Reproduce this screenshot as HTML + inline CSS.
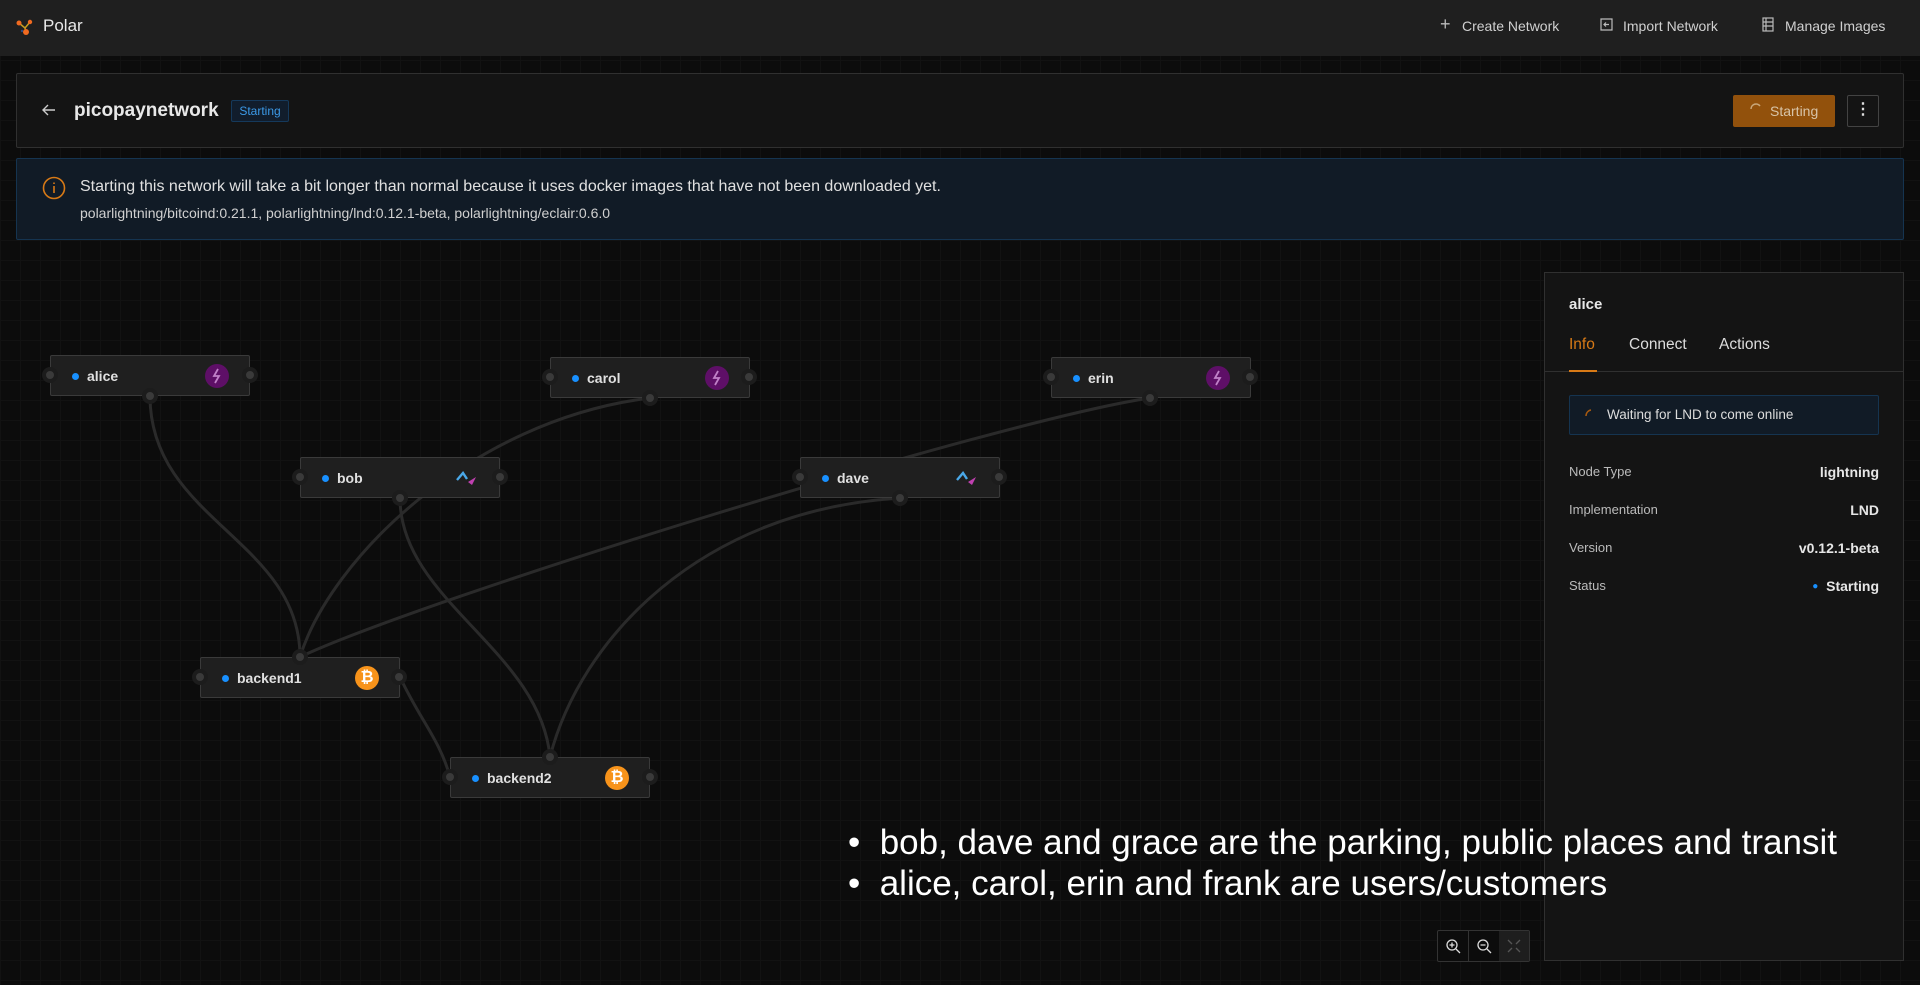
<!DOCTYPE html>
<html><head><meta charset="utf-8"><style>
*{box-sizing:border-box;margin:0;padding:0}
body{width:1920px;height:985px;overflow:hidden;background:#0c0c0c;font-family:"Liberation Sans",sans-serif;color:#ddd;position:relative;
background-image:linear-gradient(#121212 1px,transparent 1px),linear-gradient(90deg,#121212 1px,transparent 1px);background-size:20px 20px}
.abs{position:absolute}
.hdr{left:0;top:0;width:1920px;height:56px;background:#1f1f1f}
.hdr span{position:absolute;font-size:14px;color:#d0d0d0;top:18px}
.nh{left:16px;top:73px;width:1888px;height:75px;background:#141414;border:1px solid #303030;border-radius:2px}
.alert{left:16px;top:158px;width:1888px;height:82px;background:#111b26;border:1px solid #153450;border-radius:2px}
.node{position:absolute;width:200px;height:41px;background:#1f1f1f;border:1px solid #3a3a3a;border-radius:2px}
.node .dot{position:absolute;left:21px;top:17px;width:7px;height:7px;border-radius:50%;background:#1890ff}
.node .nm{position:absolute;left:36px;top:12px;font-size:14px;font-weight:bold;color:#e0e0e0}
.port{position:absolute;width:16px;height:16px;border-radius:50%;background:#3a3a3a;border:4px solid #1c1c1c}
.ic{position:absolute;right:20px;top:8px;width:24px;height:24px;border-radius:50%}
.side{left:1544px;top:272px;width:360px;height:689px;background:#141414;border:1px solid #303030}
.row{position:absolute;left:24px;right:24px;font-size:13px;color:#bbb}
.row b{position:absolute;right:0;color:#e6e6e6;font-size:14px}
.bul{font-family:"Liberation Sans",sans-serif;font-size:35px;color:#fff;left:848px}
</style></head><body>
<div class="abs hdr">
 <svg class="abs" style="left:16px;top:19px" width="18" height="18" viewBox="0 0 18 18"><line x1="3" y1="4" x2="9" y2="9" stroke="#c59c20" stroke-width="1.5"/><line x1="14" y1="3" x2="9" y2="9" stroke="#c59c20" stroke-width="1.5"/><line x1="10" y1="14" x2="9" y2="9" stroke="#c59c20" stroke-width="1.5"/><circle cx="3" cy="4" r="2.5" fill="#f06a20"/><circle cx="14" cy="3" r="2.2" fill="#f06a20"/><circle cx="10" cy="13" r="3" fill="#f06a20"/><circle cx="6" cy="12" r="1.2" fill="#2a4a80"/></svg>
 <span style="left:43px;top:16px;font-size:17px;color:#e8e8e8">Polar</span>
 <span style="left:1440px;font-size:18px;top:14px;color:#bbb">+</span><span style="left:1462px">Create Network</span>
 <svg class="abs" style="left:1600px;top:18px" width="13" height="13" viewBox="0 0 13 13" fill="none" stroke="#bbb" stroke-width="1.2"><path d="M4 1H1v11h3M1 1h11v11H1M4 6.5h5M6 4.5l-2 2 2 2"/></svg>
 <span style="left:1623px">Import Network</span>
 <svg class="abs" style="left:1762px;top:17px" width="12" height="15" viewBox="0 0 12 15" fill="none" stroke="#bbb" stroke-width="1.2"><rect x="1" y="1" width="10" height="13"/><path d="M1 5h10M1 9h10M4 1v13"/></svg>
 <span style="left:1785px">Manage Images</span>
</div>
<div class="abs nh">
 <svg class="abs" style="left:24px;top:28px" width="16" height="16" viewBox="0 0 16 16" fill="none" stroke="#ccc" stroke-width="1.4"><path d="M14 8H2M7 3L2 8l5 5"/></svg>
 <div class="abs" style="left:57px;top:26px;font-size:19px;font-weight:bold;color:#e8e8e8">picopaynetwork</div>
 <div class="abs" style="left:214px;top:26px;width:58px;height:22px;border:1px solid #15395b;background:#111d2c;color:#3c9ae8;font-size:12px;line-height:20px;text-align:center;border-radius:2px">Starting</div>
 <div class="abs" style="left:1716px;top:21px;width:102px;height:32px;background:#92510c;border-radius:2px;color:#d8c4a8;font-size:14px;line-height:32px;padding-left:37px">Starting</div>
 <svg class="abs" style="left:1732px;top:29px" width="14" height="14" viewBox="0 0 14 14" fill="none" stroke="#c9a77a" stroke-width="1.5"><path d="M2 6A5 5 0 0 1 11 3"/></svg>
 <div class="abs" style="left:1830px;top:21px;width:32px;height:32px;border:1px solid #434343;border-radius:2px;color:#ddd;text-align:center;font-size:16px;line-height:28px;font-weight:bold">⋮</div>
</div>
<div class="abs alert">
 <svg class="abs" style="left:25px;top:17px" width="24" height="24" viewBox="0 0 24 24" fill="none" stroke="#d87a16" stroke-width="1.6"><circle cx="12" cy="12" r="10.5"/><path d="M12 10v7M12 6.5v1.5"/></svg>
 <div class="abs" style="left:63px;top:19px;font-size:16px;color:#e0e0e0">Starting this network will take a bit longer than normal because it uses docker images that have not been downloaded yet.</div>
 <div class="abs" style="left:63px;top:46px;font-size:14px;color:#d0d0d0">polarlightning/bitcoind:0.21.1, polarlightning/lnd:0.12.1-beta, polarlightning/eclair:0.6.0</div>
</div>
<svg class="abs" style="left:0;top:0" width="1920" height="985" fill="none" stroke="#2a2a2a" stroke-width="3">
 <path d="M150 396C150 520 300 540 300 657"/>
 <path d="M300 657C330 560 470 420 650 398"/>
 <path d="M300 657C420 600 1000 420 1150 398"/>
 <path d="M400 498C400 600 540 650 550 757"/>
 <path d="M900 498C700 510 580 640 550 757"/>
 <path d="M400 677C420 720 440 740 450 777"/>
</svg>
<!-- nodes -->
<div class="node" style="left:50px;top:355px"><div class="dot"></div><div class="nm">alice</div><div class="ic" style="background:#5e0f67"><svg width="24" height="24" viewBox="0 0 24 24"><path d="M13 5l-4 7h5l-4 7" fill="none" stroke="#c080c8" stroke-width="1.8"/></svg></div></div>
<div class="node" style="left:550px;top:357px"><div class="dot"></div><div class="nm">carol</div><div class="ic" style="background:#5e0f67"><svg width="24" height="24" viewBox="0 0 24 24"><path d="M13 5l-4 7h5l-4 7" fill="none" stroke="#c080c8" stroke-width="1.8"/></svg></div></div>
<div class="node" style="left:1051px;top:357px"><div class="dot"></div><div class="nm">erin</div><div class="ic" style="background:#5e0f67"><svg width="24" height="24" viewBox="0 0 24 24"><path d="M13 5l-4 7h5l-4 7" fill="none" stroke="#c080c8" stroke-width="1.8"/></svg></div></div>
<div class="node" style="left:300px;top:457px"><div class="dot"></div><div class="nm">bob</div><div class="ic"><svg width="24" height="24" viewBox="0 0 24 24"><path d="M2 14l6-7 4 6" fill="none" stroke="#4aa8e8" stroke-width="2.4"/><path d="M13 16l8-5-4 8z" fill="#c040b0"/></svg></div></div>
<div class="node" style="left:800px;top:457px"><div class="dot"></div><div class="nm">dave</div><div class="ic"><svg width="24" height="24" viewBox="0 0 24 24"><path d="M2 14l6-7 4 6" fill="none" stroke="#4aa8e8" stroke-width="2.4"/><path d="M13 16l8-5-4 8z" fill="#c040b0"/></svg></div></div>
<div class="node" style="left:200px;top:657px"><div class="dot"></div><div class="nm">backend1</div><div class="ic" style="background:#f7931a;color:#fff;font-weight:bold;font-size:16px;text-align:center;line-height:24px">₿</div></div>
<div class="node" style="left:450px;top:757px"><div class="dot"></div><div class="nm">backend2</div><div class="ic" style="background:#f7931a;color:#fff;font-weight:bold;font-size:16px;text-align:center;line-height:24px">₿</div></div>
<!-- ports -->
<div class="port" style="left:42px;top:367px"></div><div class="port" style="left:242px;top:367px"></div><div class="port" style="left:142px;top:388px"></div>
<div class="port" style="left:542px;top:369px"></div><div class="port" style="left:741px;top:369px"></div><div class="port" style="left:642px;top:390px"></div>
<div class="port" style="left:1043px;top:369px"></div><div class="port" style="left:1242px;top:369px"></div><div class="port" style="left:1142px;top:390px"></div>
<div class="port" style="left:292px;top:469px"></div><div class="port" style="left:492px;top:469px"></div><div class="port" style="left:392px;top:490px"></div>
<div class="port" style="left:792px;top:469px"></div><div class="port" style="left:991px;top:469px"></div><div class="port" style="left:892px;top:490px"></div>
<div class="port" style="left:192px;top:669px"></div><div class="port" style="left:391px;top:669px"></div><div class="port" style="left:292px;top:649px"></div>
<div class="port" style="left:442px;top:769px"></div><div class="port" style="left:642px;top:769px"></div><div class="port" style="left:542px;top:749px"></div>
<!-- side -->
<div class="abs side">
 <div class="abs" style="left:24px;top:23px;font-size:15px;font-weight:bold;color:#e8e8e8">alice</div>
 <div class="abs" style="left:24px;top:63px;font-size:15.5px;color:#d87a16">Info</div>
 <div class="abs" style="left:84px;top:63px;font-size:15.5px;color:#ddd">Connect</div>
 <div class="abs" style="left:174px;top:63px;font-size:15.5px;color:#ddd">Actions</div>
 <div class="abs" style="left:0;top:98px;width:358px;height:1px;background:#303030"></div>
 <div class="abs" style="left:24px;top:97px;width:28px;height:2px;background:#d87a16"></div>
 <div class="abs" style="left:24px;top:122px;width:310px;height:40px;background:#111b26;border:1px solid #153450;border-radius:2px">
  <svg class="abs" style="left:14px;top:12px" width="12" height="12" viewBox="0 0 12 12" fill="none" stroke="#a85a10" stroke-width="1.5"><path d="M2 8A6 6 0 0 1 7 2"/></svg>
  <div class="abs" style="left:37px;top:11px;font-size:13.5px;color:#ddd">Waiting for LND to come online</div>
 </div>
 <div class="row" style="top:191px">Node Type<b>lightning</b></div>
 <div class="row" style="top:229px">Implementation<b>LND</b></div>
 <div class="row" style="top:267px">Version<b>v0.12.1-beta</b></div>
 <div class="row" style="top:305px">Status<b><span style="color:#1890ff;font-size:10px;position:relative;top:-2px">●</span>&nbsp; Starting</b></div>
</div>
<!-- zoom ctrls -->
<div class="abs" style="left:1437px;top:930px;width:93px;height:32px;border:1px solid #333;border-radius:2px;background:#0c0c0c">
 <div class="abs" style="left:30px;top:0;width:1px;height:30px;background:#333"></div>
 <div class="abs" style="left:61px;top:0;width:30px;height:30px;background:#1e1e1e"></div>
 <svg class="abs" style="left:7px;top:7px" width="16" height="16" viewBox="0 0 16 16" fill="none" stroke="#ddd" stroke-width="1.3"><circle cx="7" cy="7" r="5"/><path d="M11 11l4 4M7 4.5v5M4.5 7h5"/></svg>
 <svg class="abs" style="left:38px;top:7px" width="16" height="16" viewBox="0 0 16 16" fill="none" stroke="#ddd" stroke-width="1.3"><circle cx="7" cy="7" r="5"/><path d="M11 11l4 4M4.5 7h5"/></svg>
 <svg class="abs" style="left:69px;top:8px" width="14" height="14" viewBox="0 0 14 14" fill="none" stroke="#555" stroke-width="1.3"><path d="M1 1l4 4M13 1l-4 4M1 13l4-4M13 13l-4-4"/></svg>
</div>
<div class="abs bul" style="top:823px">•&nbsp;&nbsp;bob, dave and grace are the parking, public places and transit</div>
<div class="abs bul" style="top:864px">•&nbsp;&nbsp;alice, carol, erin and frank are users/customers</div>
</body></html>
